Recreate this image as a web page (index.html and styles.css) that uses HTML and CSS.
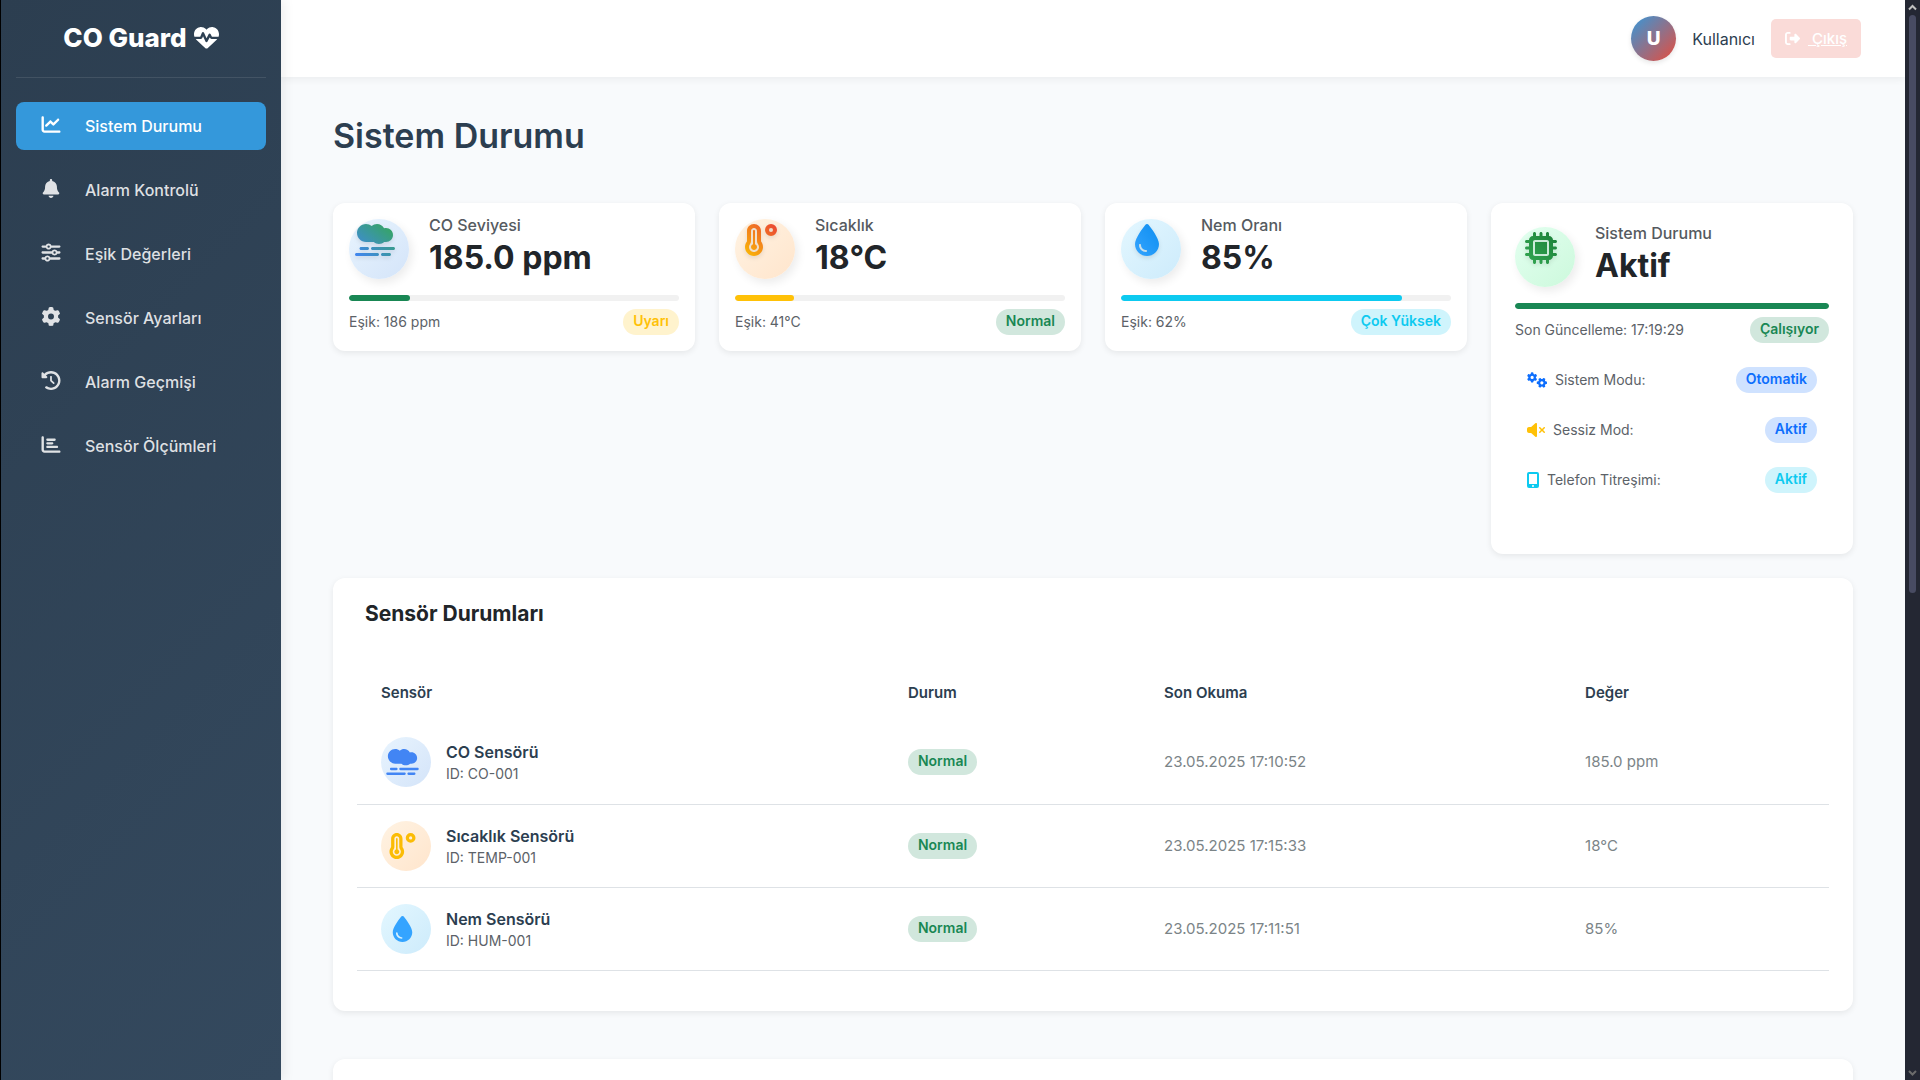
FILE: index.html
```html
<!DOCTYPE html>
<html lang="tr">
<head>
<meta charset="utf-8">
<meta name="viewport" content="width=device-width, initial-scale=1">
<title>CO Guard - Sistem Durumu</title>
<link rel="stylesheet" href="styles.css">
</head>
<body>
<svg class="sprite" aria-hidden="true">
  <defs>
    <linearGradient id="g-smog" x1="0" y1="1" x2="1" y2="0"><stop offset="0" stop-color="#4285f4"/><stop offset="1" stop-color="#34a853"/></linearGradient>
    <linearGradient id="g-temp" x1="0" y1="1" x2="1" y2="0"><stop offset="0" stop-color="#fbbc05"/><stop offset="1" stop-color="#ea4335"/></linearGradient>
    <linearGradient id="g-drop" x1="0" y1="1" x2="1" y2="0"><stop offset="0" stop-color="#34a4ff"/><stop offset="1" stop-color="#0d8ef0"/></linearGradient>
    <linearGradient id="g-chip" x1="0" y1="1" x2="1" y2="0"><stop offset="0" stop-color="#34a853"/><stop offset="1" stop-color="#1a7f37"/></linearGradient>
  </defs>
  <symbol id="heart" viewBox="0 0 512 512"><path d="M228.3 469.1L47.6 300.4c-4.2-3.9-8.2-8.1-11.9-12.4h87c22.6 0 43-13.6 51.7-34.5l10.5-25.2 49.3 109.5c3.8 8.5 12.1 14 21.4 14.1s17.8-5 22-13.3L320 253.7l1.7 3.4c9.5 19 28.9 31 50.1 31H476.3c-3.7 4.3-7.7 8.5-11.9 12.4L283.7 469.1c-7.5 7-17.4 10.9-27.7 10.9s-20.2-3.9-27.7-10.9zM503.7 240h-132c-3 0-5.8-1.7-7.2-4.4l-23.2-46.3c-4.1-8.1-12.4-13.3-21.5-13.3s-17.4 5.1-21.5 13.3l-41.4 82.8L205.9 158.2c-3.9-8.7-12.7-14.3-22.2-14.1s-18.1 5.9-21.8 14.8l-31.8 76.3c-1.2 3-4.2 4.9-7.4 4.9H16c-2.6 0-5 .4-7.3 1.1C3 225.2 0 208.2 0 190.9v-5.8c0-69.9 50.5-129.5 119.4-141C165 36.5 211.4 51.4 244 84l12 12 12-12c32.6-32.6 79-47.5 124.6-39.9C461.5 55.6 512 115.2 512 185.1v5.8c0 16.9-2.8 33.5-8.3 49.1z"/></symbol>
  <symbol id="chart-line" viewBox="0 0 512 512"><path d="M64 64c0-17.7-14.3-32-32-32S0 46.3 0 64V400c0 44.2 35.8 80 80 80H480c17.7 0 32-14.3 32-32s-14.3-32-32-32H80c-8.8 0-16-7.2-16-16V64zm406.6 86.6c12.5-12.5 12.5-32.8 0-45.3s-32.8-12.5-45.3 0L320 210.7l-57.4-57.4c-12.5-12.5-32.8-12.5-45.3 0l-112 112c-12.5 12.5-12.5 32.8 0 45.3s32.8 12.5 45.3 0L240 221.3l57.4 57.4c12.5 12.5 32.8 12.5 45.3 0l128-128z"/></symbol>
  <symbol id="bell" viewBox="0 0 448 512"><path d="M224 0c-17.7 0-32 14.3-32 32V51.2C119 66 64 130.6 64 208v18.8c0 47-17.3 92.4-48.5 127.6l-7.4 8.3c-8.4 9.4-10.4 22.9-5.3 34.4S19.4 416 32 416H416c12.6 0 24-7.4 29.2-18.9s3.1-25-5.3-34.4l-7.4-8.3C401.3 319.2 384 273.9 384 226.8V208c0-77.4-55-142-128-156.8V32c0-17.7-14.3-32-32-32zm45.3 493.3c12-12 18.7-28.3 18.7-45.3H224 160c0 17 6.7 33.3 18.7 45.3s28.3 18.7 45.3 18.7s33.3-6.7 45.3-18.7z"/></symbol>
  <symbol id="sliders" viewBox="0 0 512 512"><path d="M0 416c0 17.7 14.3 32 32 32l54.7 0c12.3 28.3 40.5 48 73.3 48s61-19.7 73.3-48L480 448c17.7 0 32-14.3 32-32s-14.3-32-32-32l-246.7 0c-12.3-28.3-40.5-48-73.3-48s-61 19.7-73.3 48L32 384c-17.7 0-32 14.3-32 32zm128 0a32 32 0 1 1 64 0 32 32 0 1 1 -64 0zM320 256a32 32 0 1 1 64 0 32 32 0 1 1 -64 0zm32-80c-32.8 0-61 19.7-73.3 48L32 224c-17.7 0-32 14.3-32 32s14.3 32 32 32l246.7 0c12.3 28.3 40.5 48 73.3 48s61-19.7 73.3-48l54.7 0c17.7 0 32-14.3 32-32s-14.3-32-32-32l-54.7 0c-12.3-28.3-40.5-48-73.3-48zM192 128a32 32 0 1 1 0-64 32 32 0 1 1 0 64zm73.3-64C253 35.7 224.8 16 192 16s-61 19.7-73.3 48L32 64C14.3 64 0 78.3 0 96s14.3 32 32 32l86.7 0c12.3 28.3 40.5 48 73.3 48s61-19.7 73.3-48L480 128c17.7 0 32-14.3 32-32s-14.3-32-32-32L265.3 64z"/></symbol>
  <symbol id="gear" viewBox="0 0 512 512"><path id="gear-path" d="M495.9 166.6c3.2 8.7 .5 18.4-6.4 24.6l-43.3 39.4c1.1 8.3 1.7 16.8 1.7 25.4s-.6 17.1-1.7 25.4l43.3 39.4c6.9 6.2 9.6 15.9 6.4 24.6c-4.4 11.9-9.7 23.3-15.8 34.3l-4.7 8.1c-6.6 11-14 21.4-22.1 31.2c-5.9 7.2-15.7 9.6-24.5 6.8l-55.7-17.7c-13.4 10.3-28.2 18.9-44 25.4l-12.5 57.1c-2 9.1-9 16.3-18.2 17.8c-13.8 2.3-28 3.5-42.5 3.5s-28.7-1.2-42.5-3.5c-9.2-1.5-16.2-8.7-18.2-17.8l-12.5-57.1c-15.8-6.5-30.6-15.1-44-25.4L83.1 425.9c-8.8 2.8-18.6 .3-24.5-6.8c-8.1-9.8-15.5-20.2-22.1-31.2l-4.7-8.1c-6.1-11-11.4-22.4-15.8-34.3c-3.2-8.7-.5-18.4 6.4-24.6l43.3-39.4C64.6 273.1 64 264.6 64 256s.6-17.1 1.7-25.4L22.4 191.2c-6.9-6.2-9.6-15.9-6.4-24.6c4.4-11.9 9.7-23.3 15.8-34.3l4.7-8.1c6.6-11 14-21.4 22.1-31.2c5.9-7.2 15.7-9.6 24.5-6.8l55.7 17.7c13.4-10.3 28.2-18.9 44-25.4l12.5-57.1c2-9.1 9-16.3 18.2-17.8C227.3 1.2 241.5 0 256 0s28.7 1.2 42.5 3.5c9.2 1.5 16.2 8.7 18.2 17.8l12.5 57.1c15.8 6.5 30.6 15.1 44 25.4l55.7-17.7c8.8-2.8 18.6-.3 24.5 6.8c8.1 9.8 15.5 20.2 22.1 31.2l4.7 8.1c6.1 11 11.4 22.4 15.8 34.3zM256 336a80 80 0 1 0 0-160 80 80 0 1 0 0 160z"/></symbol>
  <symbol id="history" viewBox="0 0 512 512"><path d="M75 75L41 41C25.9 25.9 0 36.6 0 57.9V168c0 13.3 10.7 24 24 24H134.1c21.4 0 32.1-25.9 17-41l-30.8-30.8C155 85.5 203 64 256 64c106 0 192 86 192 192s-86 192-192 192c-40.8 0-78.6-12.7-109.7-34.4c-14.5-10.1-34.4-6.6-44.6 7.9s-6.6 34.4 7.9 44.6C151.2 495 201.7 512 256 512c141.4 0 256-114.6 256-256S397.4 0 256 0C185.3 0 121.3 28.7 75 75zm181 53c-13.3 0-24 10.7-24 24V256c0 6.4 2.5 12.5 7 17l72 72c9.4 9.4 24.6 9.4 33.9 0s9.4-24.6 0-33.9l-65-65V152c0-13.3-10.7-24-24-24z"/></symbol>
  <symbol id="chart-bar" viewBox="0 0 512 512"><path d="M32 32c17.7 0 32 14.3 32 32V400c0 8.8 7.2 16 16 16H480c17.7 0 32 14.3 32 32s-14.3 32-32 32H80c-44.2 0-80-35.8-80-80V64C0 46.3 14.3 32 32 32zm96 96c0-17.7 14.3-32 32-32l192 0c17.7 0 32 14.3 32 32s-14.3 32-32 32H160c-17.7 0-32-14.3-32-32zm32 64H288c17.7 0 32 14.3 32 32s-14.3 32-32 32H160c-17.7 0-32-14.3-32-32s14.3-32 32-32zm0 96H416c17.7 0 32 14.3 32 32s-14.3 32-32 32H160c-17.7 0-32-14.3-32-32s14.3-32 32-32z"/></symbol>
  <symbol id="logout" viewBox="0 0 512 512"><path d="M377.9 105.9L500.7 228.7c7.2 7.2 11.3 17.1 11.3 27.3s-4.1 20.1-11.3 27.3L377.9 406.1c-6.4 6.4-15 9.9-24 9.9c-18.7 0-33.9-15.2-33.9-33.9l0-62.1-128 0c-17.7 0-32-14.3-32-32l0-64c0-17.7 14.3-32 32-32l128 0 0-62.1c0-18.7 15.2-33.9 33.9-33.9c9 0 17.6 3.6 24 9.9zM160 96L96 96c-17.7 0-32 14.3-32 32l0 256c0 17.7 14.3 32 32 32l64 0c17.7 0 32 14.3 32 32s-14.3 32-32 32l-64 0c-53 0-96-43-96-96L0 128C0 75 43 32 96 32l64 0c17.7 0 32 14.3 32 32s-14.3 32-32 32z"/></symbol>
  <symbol id="smog" viewBox="0 0 640 512"><path d="M32 144c0 79.5 64.5 144 144 144H299.3c22.6 19.9 52.2 32 84.7 32s62.1-12.1 84.7-32H496c61.9 0 112-50.1 112-112s-50.1-112-112-112c-10.7 0-21 1.5-30.8 4.3C443.8 27.7 401.1 0 352 0c-32.6 0-62.4 12.2-85.1 32.3C242.1 12.1 210.5 0 176 0C96.5 0 32 64.5 32 144zM616 368H280c-13.3 0-24 10.7-24 24s10.7 24 24 24H616c13.3 0 24-10.7 24-24s-10.7-24-24-24zm-64 96H440c-13.3 0-24 10.7-24 24s10.7 24 24 24H552c13.3 0 24-10.7 24-24s-10.7-24-24-24zm-192 0H24c-13.3 0-24 10.7-24 24s10.7 24 24 24H360c13.3 0 24-10.7 24-24s-10.7-24-24-24zM224 392c0-13.3-10.7-24-24-24H96c-13.3 0-24 10.7-24 24s10.7 24 24 24H200c13.3 0 24-10.7 24-24z"/></symbol>
  <symbol id="temp" viewBox="0 0 512 512"><path d="M416 64a32 32 0 1 1 0 64 32 32 0 1 1 0-64zm0 128A96 96 0 1 0 416 0a96 96 0 1 0 0 192zM96 112c0-26.5 21.5-48 48-48s48 21.5 48 48V276.5c0 17.3 7.1 31.9 15.3 42.5C217.8 332.6 224 349.5 224 368c0 44.2-35.8 80-80 80s-80-35.8-80-80c0-18.5 6.2-35.4 16.7-48.9C88.9 308.4 96 293.8 96 276.5V112zM144 0C82.1 0 32 50.2 32 112V276.5c0 .1-.1 .3-.2 .6c-.2 .6-.8 1.6-1.7 2.8C11.2 304.2 0 334.8 0 368c0 79.5 64.5 144 144 144s144-64.5 144-144c0-33.2-11.2-63.8-30.1-88.1c-.9-1.2-1.5-2.2-1.7-2.8c-.1-.3-.2-.5-.2-.6V112C256 50.2 205.8 0 144 0zm0 416c26.5 0 48-21.5 48-48c0-20.9-13.4-38.7-32-45.3V112c0-8.8-7.2-16-16-16s-16 7.2-16 16V322.7c-18.6 6.6-32 24.4-32 45.3c0 26.5 21.5 48 48 48z"/></symbol>
  <symbol id="drop" viewBox="0 0 384 512"><path d="M192 512C86 512 0 426 0 320C0 228.8 130.2 57.7 166.6 11.7C172.6 4.2 181.5 0 191.1 0h1.8c9.6 0 18.5 4.2 24.5 11.7C253.8 57.7 384 228.8 384 320c0 106-86 192-192 192zM96 336c0-8.8-7.2-16-16-16s-16 7.2-16 16c0 61.9 50.1 112 112 112c8.8 0 16-7.2 16-16s-7.2-16-16-16c-44.2 0-80-35.8-80-80z"/></symbol>
  <symbol id="chip" viewBox="0 0 512 512"><path d="M176 24c0-13.3-10.7-24-24-24s-24 10.7-24 24V64c-35.3 0-64 28.7-64 64H24c-13.3 0-24 10.7-24 24s10.7 24 24 24H64v56H24c-13.3 0-24 10.7-24 24s10.7 24 24 24H64v56H24c-13.3 0-24 10.7-24 24s10.7 24 24 24H64c0 35.3 28.7 64 64 64v40c0 13.3 10.7 24 24 24s24-10.7 24-24V448h56v40c0 13.3 10.7 24 24 24s24-10.7 24-24V448h56v40c0 13.3 10.7 24 24 24s24-10.7 24-24V448c35.3 0 64-28.7 64-64h40c13.3 0 24-10.7 24-24s-10.7-24-24-24H448V280h40c13.3 0 24-10.7 24-24s-10.7-24-24-24H448V176h40c13.3 0 24-10.7 24-24s-10.7-24-24-24H448c0-35.3-28.7-64-64-64V24c0-13.3-10.7-24-24-24s-24 10.7-24 24V64H280V24c0-13.3-10.7-24-24-24s-24 10.7-24 24V64H176V24zM160 128H352c17.7 0 32 14.3 32 32V352c0 17.7-14.3 32-32 32H160c-17.7 0-32-14.3-32-32V160c0-17.7 14.3-32 32-32zm192 32H160V352H352V160z"/></symbol>
  <symbol id="gears" viewBox="0 0 640 512"><use href="#gear-path" transform="translate(0 10) scale(.64)"/><use href="#gear-path" transform="translate(312 182) rotate(30 164 164) scale(.64)"/></symbol>
  <symbol id="mute" viewBox="0 0 576 512"><path d="M301.1 34.8C312.6 40 320 51.4 320 64V448c0 12.6-7.4 24-18.9 29.2s-25 3.1-34.4-5.3L131.8 352H64c-35.3 0-64-28.7-64-64V224c0-35.3 28.7-64 64-64h67.8L266.7 40.1c9.4-8.4 22.9-10.4 34.4-5.3zM425 167l55 55 55-55c9.4-9.4 24.6-9.4 33.9 0s9.4 24.6 0 33.9l-55 55 55 55c9.4 9.4 9.4 24.6 0 33.9s-24.6 9.4-33.9 0l-55-55-55 55c-9.4 9.4-24.6 9.4-33.9 0s-9.4-24.6 0-33.9l55-55-55-55c-9.4-9.4-9.4-24.6 0-33.9s24.6-9.4 33.9 0z"/></symbol>
  <symbol id="mobile" viewBox="0 0 384 512"><path fill-rule="evenodd" d="M64 0H320a64 64 0 0 1 64 64V448a64 64 0 0 1-64 64H64a64 64 0 0 1-64-64V64A64 64 0 0 1 64 0zM64 64V384H320V64zM192 416a32 32 0 1 0 0 64 32 32 0 1 0 0-64z"/></symbol>
</svg>

<div class="app">
  <aside class="sidebar">
    <div class="brand"><span>CO Guard</span><svg class="brand-icon"><use href="#heart"/></svg></div>
    <nav class="menu">
      <a class="menu-item active" href="#"><svg class="menu-icon"><use href="#chart-line"/></svg>Sistem Durumu</a>
      <a class="menu-item" href="#"><svg class="menu-icon"><use href="#bell"/></svg>Alarm Kontrolü</a>
      <a class="menu-item" href="#"><svg class="menu-icon"><use href="#sliders"/></svg>Eşik Değerleri</a>
      <a class="menu-item" href="#"><svg class="menu-icon"><use href="#gear"/></svg>Sensör Ayarları</a>
      <a class="menu-item" href="#"><svg class="menu-icon"><use href="#history"/></svg>Alarm Geçmişi</a>
      <a class="menu-item" href="#"><svg class="menu-icon"><use href="#chart-bar"/></svg>Sensör Ölçümleri</a>
    </nav>
  </aside>

  <div class="page">
    <header class="topbar">
      <span class="avatar">U</span>
      <span class="user">Kullanıcı</span>
      <a class="logout" href="#"><svg class="logout-icon"><use href="#logout"/></svg><span class="logout-text">&nbsp;Çıkış</span></a>
    </header>

    <main class="content">
      <h1 class="title">Sistem Durumu</h1>

      <section class="cards">
        <article class="card">
          <div class="card-head">
            <span class="disc disc-blue"><svg class="disc-icon f-smog"><use href="#smog"/></svg></span>
            <div><h2 class="label">CO Seviyesi</h2><p class="value">185.0 ppm</p></div>
          </div>
          <div class="bar"><div class="fill green" style="width:18.5%"></div></div>
          <div class="card-foot"><span>Eşik: 186 ppm</span><span class="badge warning">Uyarı</span></div>
        </article>
        <article class="card">
          <div class="card-head">
            <span class="disc disc-orange"><svg class="disc-icon f-temp"><use href="#temp"/></svg></span>
            <div><h2 class="label">Sıcaklık</h2><p class="value">18°C</p></div>
          </div>
          <div class="bar"><div class="fill yellow" style="width:18%"></div></div>
          <div class="card-foot"><span>Eşik: 41°C</span><span class="badge success">Normal</span></div>
        </article>
        <article class="card">
          <div class="card-head">
            <span class="disc disc-cyan"><svg class="disc-icon f-drop"><use href="#drop"/></svg></span>
            <div><h2 class="label">Nem Oranı</h2><p class="value">85%</p></div>
          </div>
          <div class="bar"><div class="fill cyan" style="width:85%"></div></div>
          <div class="card-foot"><span>Eşik: 62%</span><span class="badge info">Çok Yüksek</span></div>
        </article>
        <article class="card card-system">
          <div class="card-head">
            <span class="disc disc-green"><svg class="disc-icon f-chip"><use href="#chip"/></svg></span>
            <div><h2 class="label">Sistem Durumu</h2><p class="value">Aktif</p></div>
          </div>
          <div class="bar"><div class="fill green" style="width:100%"></div></div>
          <div class="card-foot"><span>Son Güncelleme: 17:19:29</span><span class="badge success">Çalışıyor</span></div>
          <ul class="modes">
            <li class="mode"><svg class="mode-icon gears"><use href="#gears"/></svg><span>Sistem Modu:</span><span class="badge primary">Otomatik</span></li>
            <li class="mode"><svg class="mode-icon mute"><use href="#mute"/></svg><span>Sessiz Mod:</span><span class="badge primary">Aktif</span></li>
            <li class="mode"><svg class="mode-icon mobile"><use href="#mobile"/></svg><span>Telefon Titreşimi:</span><span class="badge info">Aktif</span></li>
          </ul>
        </article>
      </section>

      <section class="panel">
        <h2 class="panel-title">Sensör Durumları</h2>
        <table class="sensors">
          <colgroup><col class="col-name"><col class="col-state"><col class="col-time"><col></colgroup>
          <thead><tr><th>Sensör</th><th>Durum</th><th>Son Okuma</th><th>Değer</th></tr></thead>
          <tbody>
            <tr>
              <td><div class="sensor"><span class="disc small disc-blue"><svg class="disc-icon c-blue"><use href="#smog"/></svg></span><div><div class="name">CO Sensörü</div><div class="id">ID: CO-001</div></div></div></td>
              <td><span class="badge success">Normal</span></td><td>23.05.2025 17:10:52</td><td>185.0 ppm</td>
            </tr>
            <tr>
              <td><div class="sensor"><span class="disc small disc-orange"><svg class="disc-icon c-yellow"><use href="#temp"/></svg></span><div><div class="name">Sıcaklık Sensörü</div><div class="id">ID: TEMP-001</div></div></div></td>
              <td><span class="badge success">Normal</span></td><td>23.05.2025 17:15:33</td><td>18°C</td>
            </tr>
            <tr>
              <td><div class="sensor"><span class="disc small disc-cyan"><svg class="disc-icon c-sky"><use href="#drop"/></svg></span><div><div class="name">Nem Sensörü</div><div class="id">ID: HUM-001</div></div></div></td>
              <td><span class="badge success">Normal</span></td><td>23.05.2025 17:11:51</td><td>85%</td>
            </tr>
          </tbody>
        </table>
      </section>

      <section class="panel next"></section>
    </main>
  </div>

  <div class="scrollbar" aria-hidden="true">
    <svg class="arrow" viewBox="0 0 15 15"><path d="M4 9.5 7.5 6 11 9.5"/></svg>
    <div class="track"><div class="thumb"></div></div>
    <svg class="arrow down" viewBox="0 0 15 15"><path d="M4 6 7.5 9.5 11 6"/></svg>
  </div>
</div>
</body>
</html>
```
FILE: styles.css
```css
* { box-sizing: border-box; }

body {
  margin: 0;
  background: #f8fafc;
  color: #212529;
  font-family: Inter, "Liberation Sans", sans-serif;
  font-size: 16px;
  line-height: 24px;
}

h1, h2, p, ul { margin: 0; padding: 0; }
ul { list-style: none; }
svg { display: block; flex: none; fill: currentColor; }
.sprite { position: absolute; width: 0; height: 0; }

.app { display: flex; height: 100vh; overflow: hidden; }

/* Sidebar */
.sidebar {
  flex: none;
  width: 281px;
  padding: 0 15px;
  border-left: 1px solid #000;
  background: linear-gradient(135deg, #2c3e50, #34495e);
  box-shadow: 2px 0 12px rgba(0, 0, 0, .08);
  z-index: 1;
}
.brand {
  display: flex;
  align-items: center;
  justify-content: center;
  gap: 7px;
  height: 78px;
  padding-bottom: 2px;
  border-bottom: 1px solid rgba(255, 255, 255, .1);
  color: #fff;
  font-size: 26px;
  font-weight: 800;
}
.brand-icon { width: 25px; height: 25px; }
.menu { display: flex; flex-direction: column; gap: 16px; padding-top: 24px; }
.menu-item {
  display: flex;
  align-items: center;
  gap: 24px;
  height: 48px;
  padding: 0 25px 1px;
  border-radius: 8px;
  color: rgba(255, 255, 255, .85);
  font-weight: 500;
  font-size: 16px;
  text-decoration: none;
}
.menu-item.active { background: #3498db; color: #fff; }
.menu-icon { width: 20px; height: 19px; margin-bottom: 2px; }

/* Top bar */
.page { flex: 1; min-width: 0; }
.topbar {
  display: flex;
  align-items: center;
  justify-content: flex-end;
  gap: 16px;
  height: 77px;
  padding-right: 44px;
  background: #fff;
  box-shadow: 0 2px 8px rgba(0, 0, 0, .06);
}
.avatar {
  display: grid;
  place-items: center;
  width: 45px;
  height: 45px;
  border-radius: 50%;
  background: linear-gradient(135deg, #3498db, #e74c3c);
  box-shadow: 0 2px 5px rgba(0, 0, 0, .1);
  color: #fff;
  font-size: 19px;
  font-weight: 800;
}
.user { color: #2c3e50; }
.logout {
  display: flex;
  align-items: center;
  gap: 8px;
  height: 39px;
  padding: 0 14px;
  border-radius: 5px;
  background: #fadbd8;
  color: #fff;
  font-size: 15px;
  font-weight: 500;
  text-decoration: none;
}
.logout-icon { width: 15px; height: 15px; }
.logout-text { text-decoration: underline; }

/* Content */
.content { padding: 35px 52px 0; }
.title {
  margin-bottom: 43px;
  color: #2c3e50;
  font-size: 34px;
  font-weight: 600;
  line-height: 48px;
}
.cards {
  display: grid;
  grid-template-columns: repeat(4, 1fr);
  align-items: start;
  gap: 24px;
  margin-bottom: 24px;
}
.card, .panel {
  border-radius: 12px;
  background: #fff;
  box-shadow: 0 2px 6px rgba(0, 0, 0, .08);
}
.card { padding: 16px; }
.card-system { padding: 24px 24px 49px; }
.card-head { display: flex; gap: 20px; }
.card-head > div { margin-top: -8px; }
.disc {
  display: flex;
  align-items: center;
  justify-content: center;
  flex: none;
  width: 60px;
  height: 60px;
  padding: 0 8px 18px 0;
  border-radius: 50%;
  box-shadow: 3px 4px 10px rgba(0, 0, 0, .08);
}
.disc-icon { width: 40px; height: 32px; filter: drop-shadow(0 2px 2px rgba(0, 0, 0, .1)); }
.disc.small { width: 50px; height: 50px; padding: 0 8px 0 0; box-shadow: none; }
.small .disc-icon { width: 33px; height: 26px; filter: none; }
.disc-blue { background: linear-gradient(135deg, #e8f4fe, #d4e4f9); }
.disc-orange { background: linear-gradient(135deg, #fff3e3, #ffe5cc); }
.disc-cyan { background: linear-gradient(135deg, #e3f7ff, #cdebfb); }
.disc-green { background: linear-gradient(135deg, #e3fff0, #ccf9dc); }
.f-smog { fill: url(#g-smog); }
.f-temp { fill: url(#g-temp); }
.f-drop { fill: url(#g-drop); }
.f-chip { fill: url(#g-chip); }
.c-blue { color: #4285f4; }
.c-yellow { color: #fbbc05; }
.c-sky { color: #34a4ff; }
.label { color: #555a60; font-size: 16px; font-weight: 500; line-height: 28px; }
.value { font-size: 32px; font-weight: 700; line-height: 38px; }
.bar { height: 6px; margin: 16px 0 8px; border-radius: 3px; background: #f1f1f1; overflow: hidden; }
.fill { height: 100%; border-radius: 3px; }
.green { background: #198754; }
.yellow { background: #ffc107; }
.cyan { background: #0dcaf0; }
.card-foot {
  display: flex;
  align-items: center;
  justify-content: space-between;
  height: 26px;
  color: #5c6268;
  font-size: 14px;
}
.badge {
  display: inline-block;
  padding: 2px 10px 4px;
  border-radius: 13px;
  font-size: 14px;
  font-weight: 600;
  line-height: 20px;
}
.success { background: #d1e7dd; color: #198754; }
.warning { background: #fff3cd; color: #ffc107; }
.info { background: #cff4fc; color: #0dcaf0; }
.primary { background: #cfe2ff; color: #0d6efd; }

.modes { display: grid; gap: 24px; padding: 24px 12px 12px; }
.mode { display: flex; align-items: center; gap: 8px; color: #5c6268; font-size: 14px; }
.mode .badge { margin-left: auto; }
.mode-icon { height: 16px; }
.gears { width: 20px; color: #0d6efd; }
.mute { width: 18px; color: #ffc107; }
.mobile { width: 12px; color: #0dcaf0; }

.panel { padding: 20px 24px 40px; }
.panel-title { padding: 0 8px; font-size: 21px; font-weight: 700; line-height: 32px; }
.sensors { width: 100%; margin-top: 35px; border-collapse: collapse; table-layout: fixed; }
.col-name { width: 35.8%; }
.col-state { width: 17.4%; }
.col-time { width: 28.6%; }
th { height: 56px; padding: 0 24px; color: #2c3e50; font-size: 15px; font-weight: 600; text-align: left; }
td { height: 83px; padding: 0 24px; border-bottom: 1px solid #dee2e6; color: #7b8487; font-size: 15px; }
.sensor { display: flex; align-items: center; gap: 15px; }
.name { color: #2c3e50; font-size: 16px; font-weight: 600; line-height: 24px; }
.id { color: #5c6268; font-size: 14px; line-height: 20px; }
.next { min-height: 300px; margin-top: 48px; }

/* Window scrollbar */
.scrollbar { display: flex; flex-direction: column; flex: none; width: 15px; background: #242733; }
.arrow { width: 15px; height: 15px; fill: none; stroke: #c0c0c0; stroke-width: 2; }
.down { stroke: #6b6b6b; }
.track { flex: 1; padding: 0 4px; }
.thumb { height: 55%; border-radius: 4px; background: #484b62; }
```
